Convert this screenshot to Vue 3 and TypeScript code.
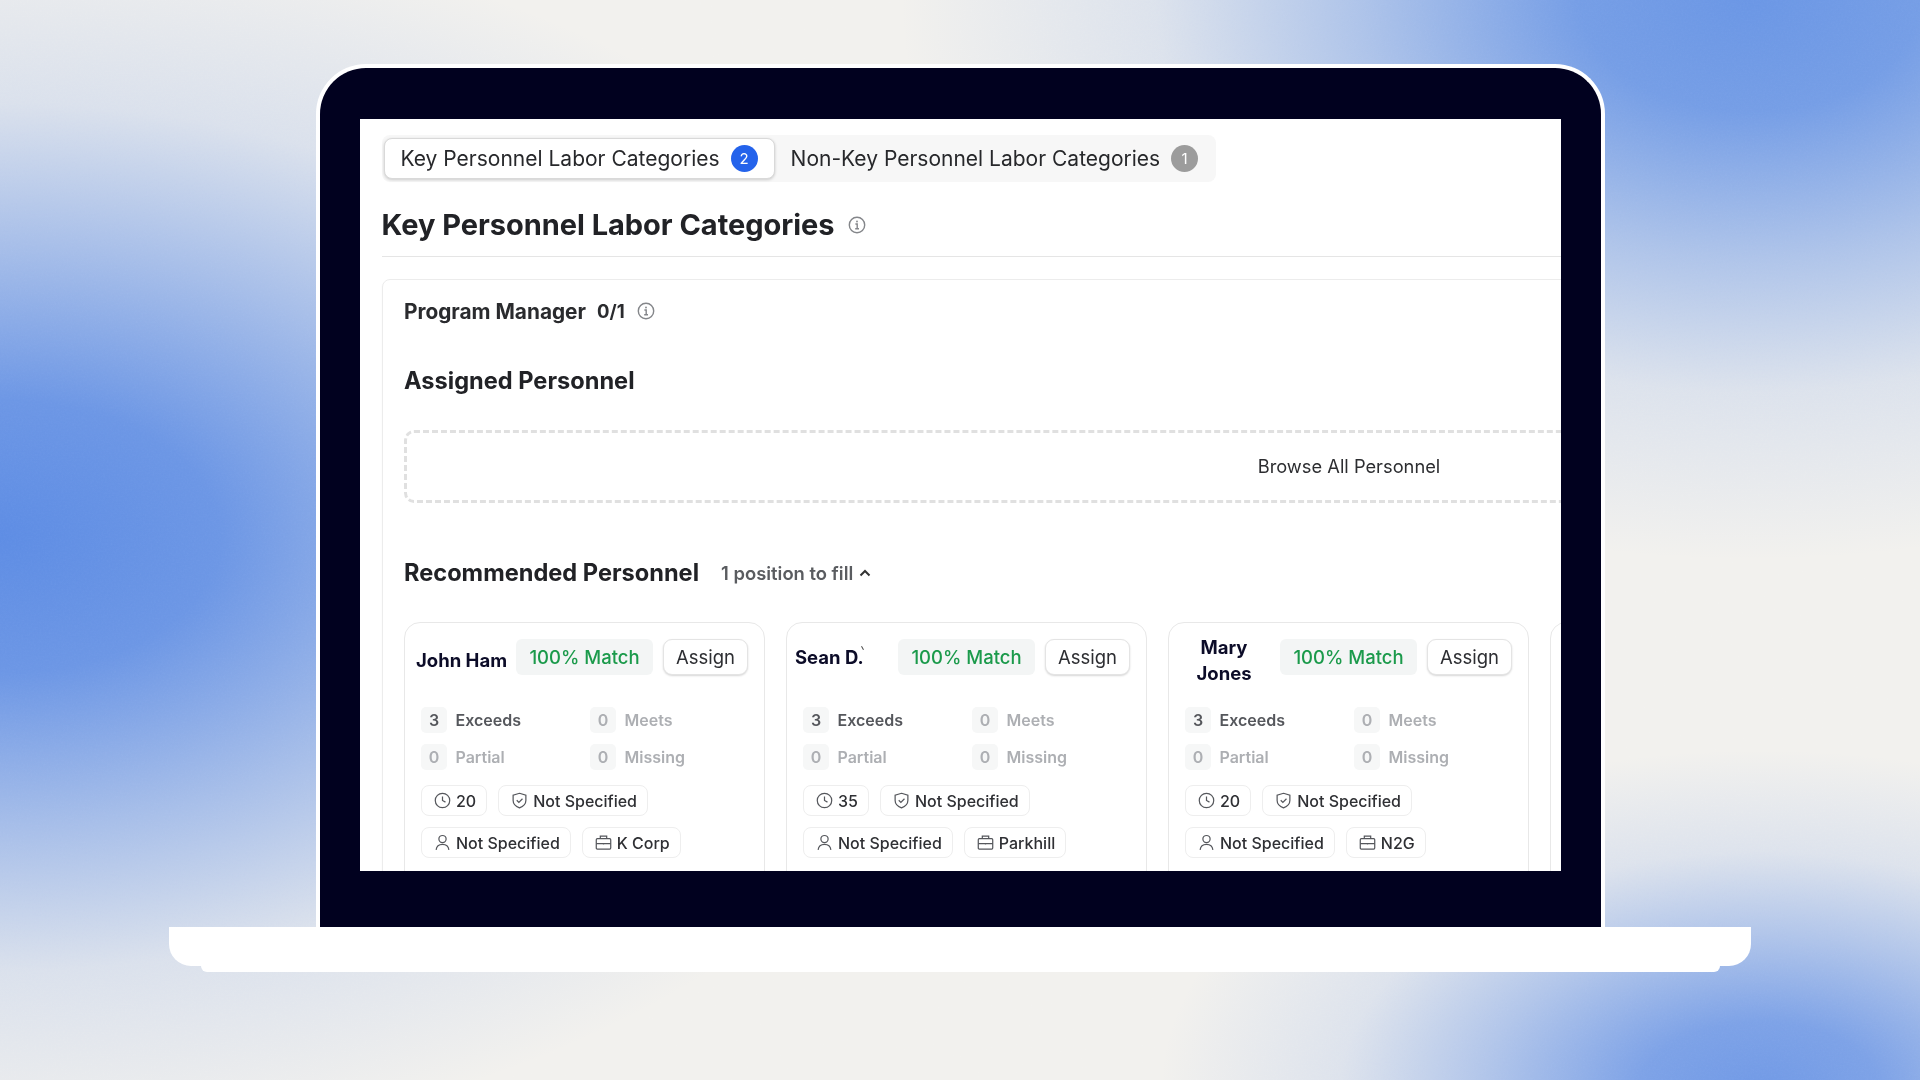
<script setup lang="ts">
interface Person {
  name: string;
  nameClass: string;
  hours: number;
  company: string;
}

const people: Person[] = [
  { name: "John Ham", nameClass: "name-john", hours: 20, company: "K Corp" },
  { name: "Sean D.", nameClass: "name-sean", hours: 35, company: "Parkhill" },
  { name: "Mary Jones", nameClass: "name-mary", hours: 20, company: "N2G" },
];

const stats = [
  { count: 3, label: "Exceeds", active: true },
  { count: 0, label: "Meets", active: false },
  { count: 0, label: "Partial", active: false },
  { count: 0, label: "Missing", active: false },
];
</script>

<template>
  <div class="stage">
    <svg class="noise" width="1920" height="1080" aria-hidden="true">
      <filter id="grain">
        <feTurbulence type="fractalNoise" baseFrequency="0.55" numOctaves="2" seed="4" />
        <feColorMatrix type="saturate" values="0" />
      </filter>
      <rect width="1920" height="1080" filter="url(#grain)" />
    </svg>

    <div class="lid">
      <div class="screen">
        <div class="tabs">
          <div class="tab tab-active">
            Key Personnel Labor Categories
            <span class="count count-blue">2</span>
          </div>
          <div class="tab">
            Non-Key Personnel Labor Categories
            <span class="count count-gray">1</span>
          </div>
        </div>

        <div class="page-head">
          <h1>Key Personnel Labor Categories</h1>
          <svg class="info info-lg" viewBox="0 0 18 18">
            <circle cx="9" cy="9" r="7.7" />
            <path d="M7.4 8h1.8v4.6M7.2 12.8h3.8" />
            <circle class="dot" cx="9" cy="5.5" r="0.9" />
          </svg>
        </div>

        <section class="panel">
          <div class="role">
            <span>Program Manager</span>
            <span class="role-count">0/1</span>
            <svg class="info" viewBox="0 0 18 18">
              <circle cx="9" cy="9" r="7.7" />
              <path d="M7.4 8h1.8v4.6M7.2 12.8h3.8" />
              <circle class="dot" cx="9" cy="5.5" r="0.9" />
            </svg>
          </div>

          <h2 class="assigned">Assigned Personnel</h2>
          <div class="dropzone">Browse All Personnel</div>

          <div class="rec-head">
            <h2>Recommended Personnel</h2>
            <span class="fill">1 position to fill</span>
            <svg class="chevron" viewBox="0 0 12 8">
              <path d="M1.5 6.5 6 2l4.5 4.5" />
            </svg>
          </div>

          <div class="cards">
            <article v-for="p in people" :key="p.name" class="card">
              <div class="card-top">
                <div class="name" :class="p.nameClass">
                  <span class="name-text">{{ p.name }}</span>
                </div>
                <span class="match">100% Match</span>
                <button class="assign">Assign</button>
              </div>

              <div class="stats">
                <div v-for="s in stats" :key="s.label" class="stat" :class="{ 'stat-on': s.active }">
                  <span class="num">{{ s.count }}</span>
                  <span>{{ s.label }}</span>
                </div>
              </div>

              <div class="chips">
                <span class="chip">
                  <svg viewBox="0 0 16 16">
                    <circle cx="8" cy="8" r="6.8" />
                    <path d="M8 4.200V8l2.800 1.500" />
                  </svg>
                  {{ p.hours }}
                </span>
                <span class="chip">
                  <svg viewBox="0 0 16 16">
                    <path d="M8 1.200 14 3v5c0 3.400-2.600 5.600-6 6.900C4.600 13.600 2 11.400 2 8V3z" />
                    <path d="m5.400 7.800 2 2 3.400-3.400" />
                  </svg>
                  Not Specified
                </span>
              </div>
              <div class="chips">
                <span class="chip">
                  <svg viewBox="0 0 16 16">
                    <circle cx="8" cy="4.800" r="3.400" />
                    <path d="M2 15c.4-3.600 2.800-5.200 6-5.200s5.600 1.600 6 5.200" />
                  </svg>
                  Not Specified
                </span>
                <span class="chip">
                  <svg viewBox="0 0 16 16">
                    <rect x="1.200" y="4.400" width="13.600" height="9.800" rx="1" />
                    <path d="M5 4.400V2h6v2.400M1.200 9h13.600M8 8.400v1.400" />
                  </svg>
                  {{ p.company }}
                </span>
              </div>
            </article>
            <article class="card card-next"></article>
          </div>
        </section>
      </div>
    </div>
    <div class="base"></div>
    <div class="foot"></div>
  </div>
</template>

<style>
html,
body {
  margin: 0;
  background: #f2f1ee;
}
</style>

<style scoped>
.stage {
  position: relative;
  width: 1920px;
  height: 1080px;
  overflow: hidden;
  box-sizing: border-box;
  padding-top: 64px;
  display: flex;
  flex-direction: column;
  align-items: center;
  font-family: Inter, "Liberation Sans", sans-serif;
  color: #1f2023;
  background:
    radial-gradient(
      1000px 620px at 0 537px,
      rgba(93, 140, 228, 1) 0%,
      rgba(93, 140, 228, 0.9) 22%,
      rgba(93, 140, 228, 0.52) 46%,
      rgba(93, 140, 228, 0.16) 70%,
      rgba(93, 140, 228, 0.07) 87%,
      rgba(93, 140, 228, 0) 100%
    ),
    radial-gradient(
      850px 560px at 1750px 0,
      rgba(106, 150, 229, 1) 0%,
      rgba(106, 150, 229, 0.92) 20%,
      rgba(106, 150, 229, 0.5) 46%,
      rgba(106, 150, 229, 0.16) 70%,
      rgba(106, 150, 229, 0.07) 87%,
      rgba(106, 150, 229, 0) 100%
    ),
    radial-gradient(
      600px 340px at 1760px 1090px,
      rgba(112, 153, 230, 1) 0%,
      rgba(112, 153, 230, 0.9) 20%,
      rgba(112, 153, 230, 0.5) 46%,
      rgba(112, 153, 230, 0.16) 70%,
      rgba(112, 153, 230, 0.07) 87%,
      rgba(112, 153, 230, 0) 100%
    ),
    #f2f1ee;
}

.noise {
  position: absolute;
  inset: 0;
  opacity: 0.14;
  mix-blend-mode: soft-light;
  pointer-events: none;
}

.lid {
  position: relative;
  box-sizing: border-box;
  width: 1289px;
  height: 863px;
  flex: none;
  padding: 51px 39px 56px 40px;
  background: #01011f;
  border: 4px solid #fff;
  border-bottom: 0;
  border-radius: 50px 50px 0 0;
}

.base {
  position: relative;
  flex: none;
  width: 1582px;
  height: 39px;
  background: #fff;
  border-radius: 0 0 22px 22px;
}

.foot {
  position: relative;
  flex: none;
  width: 1519px;
  height: 6px;
  background: #fff;
  border-radius: 0 0 8px 8px;
}

.screen {
  box-sizing: border-box;
  width: 1201px;
  height: 752px;
  padding: 16px 0 0 22px;
  background: #fff;
  overflow: hidden;
}

.tabs {
  display: inline-flex;
  align-items: center;
  height: 47px;
  padding: 0 2px 0 2px;
  box-sizing: border-box;
  border-radius: 8px;
  background: #f7f7f7;
  white-space: nowrap;
}

.tab {
  display: flex;
  align-items: center;
  gap: 11px;
  height: 41px;
  padding: 0 16px;
  font-size: 21px;
  color: #27282b;
  box-sizing: border-box;
}

.tab-active {
  background: #fff;
  border: 1px solid #d9d9d9;
  border-radius: 8px;
  box-shadow: 0 1px 3px rgba(0, 0, 0, 0.18);
}

.count {
  display: flex;
  align-items: center;
  justify-content: center;
  width: 27px;
  height: 27px;
  border-radius: 50%;
  font-size: 15px;
  color: #fff;
}

.count-blue {
  background: #2463eb;
}

.count-gray {
  background: #9c9c9c;
}

.page-head {
  display: flex;
  align-items: center;
  gap: 13px;
  margin-top: 26px;
  padding-bottom: 14px;
  border-bottom: 1px solid #e5e5e5;
}

h1 {
  margin: 0;
  font-size: 29px;
  line-height: 34px;
  font-weight: 700;
  letter-spacing: -0.03px;
  color: #212226;
}

.info {
  flex: none;
  width: 18px;
  height: 18px;
  fill: none;
  stroke: #84868a;
  stroke-width: 1.400;
}

.info .dot {
  fill: #84868a;
  stroke: none;
}

.panel {
  box-sizing: border-box;
  width: 2000px;
  height: 700px;
  margin-top: 22px;
  padding: 19px 0 0 21.500px;
  border: 1px solid #ececec;
  border-radius: 8px;
  box-shadow: 0 1px 2px rgba(0, 0, 0, 0.04);
}

.role {
  display: flex;
  align-items: center;
  height: 24px;
  font-size: 20.800px;
  font-weight: 700;
  color: #2a2b2e;
}

.role-count {
  margin-left: 11px;
  font-size: 18.500px;
}

.role .info {
  margin-left: 12px;
}

h2 {
  margin: 0;
  font-size: 23.600px;
  line-height: 30px;
  font-weight: 700;
  color: #212226;
}

.assigned {
  margin-top: 43px;
}

.dropzone {
  box-sizing: border-box;
  display: flex;
  align-items: center;
  justify-content: center;
  width: 1890px;
  height: 73px;
  margin-top: 34px;
  padding-bottom: 2px;
  border: 3px dashed #e0e0e0;
  border-radius: 10px;
  font-size: 18.300px;
  color: #2c2d30;
}

.rec-head {
  display: flex;
  align-items: center;
  margin-top: 55px;
}

.fill {
  margin-left: 22px;
  font-size: 18.400px;
  font-weight: 600;
  color: #5a5c60;
}

.chevron {
  width: 12px;
  height: 8px;
  margin-left: 6px;
  fill: none;
  stroke: #333;
  stroke-width: 2;
}

.cards {
  display: flex;
  gap: 21px;
  margin-top: 34px;
}

.card {
  box-sizing: border-box;
  width: 361px;
  height: 300px;
  flex: none;
  padding: 16px 16px 0 8px;
  border: 1px solid #e8e8e8;
  border-radius: 16px;
}

.card-next {
  width: 200px;
}

.card-top {
  display: flex;
  align-items: center;
  height: 36px;
}

.name {
  box-sizing: border-box;
  width: 103px;
  flex: none;
  font-size: 18.500px;
  line-height: 26px;
  font-weight: 700;
  color: #0c0c28;
}

.name-john {
  padding-left: 3px;
  white-space: nowrap;
  margin-top: 6px;
}

.name-sean .name-text {
  position: relative;
}

.name-sean .name-text::after {
  content: "";
  position: absolute;
  right: 1px;
  top: 0;
  width: 1px;
  height: 4px;
  background: #444;
  transform: rotate(-30deg);
}

.name-mary {
  padding: 0 9px 0 0;
  margin-top: 6px;
  text-align: center;
}

.match {
  box-sizing: border-box;
  width: 137px;
  height: 36px;
  flex: none;
  line-height: 36px;
  text-align: center;
  border-radius: 6px;
  background: #f3f5f5;
  font-size: 18.500px;
  font-weight: 500;
  color: #1b9a4b;
}

.assign {
  box-sizing: border-box;
  width: 85px;
  height: 36px;
  flex: none;
  margin-left: 10px;
  padding: 0;
  background: #fff;
  border: 1px solid #e4e4e4;
  border-radius: 9px;
  box-shadow: 0 1px 2px rgba(0, 0, 0, 0.16);
  font-family: inherit;
  font-size: 18.500px;
  color: #2d2e32;
}

.stats {
  display: grid;
  grid-template-columns: 169px 1fr;
  row-gap: 11px;
  margin: 32px 0 0 8px;
}

.stat {
  display: flex;
  align-items: center;
  gap: 8.500px;
  font-size: 16px;
  font-weight: 600;
  color: #adafb3;
}

.stat-on {
  color: #55575c;
}

.num {
  display: flex;
  align-items: center;
  justify-content: center;
  width: 26px;
  height: 26px;
  border-radius: 5px;
  background: #f6f7f7;
}

.chips {
  display: flex;
  gap: 11px;
  margin: 11px 0 0 8px;
}

.stats + .chips {
  margin-top: 15px;
}

.chip {
  box-sizing: border-box;
  display: flex;
  align-items: center;
  gap: 5px;
  height: 31px;
  padding: 0 10px 0 12px;
  border: 1px solid #eeeeee;
  border-radius: 8px;
  font-size: 16px;
  font-weight: 500;
  color: #2f3034;
  white-space: nowrap;
}

.chip svg {
  width: 17px;
  height: 17px;
  flex: none;
  fill: none;
  stroke: #55575c;
  stroke-width: 1.150;
}
</style>
